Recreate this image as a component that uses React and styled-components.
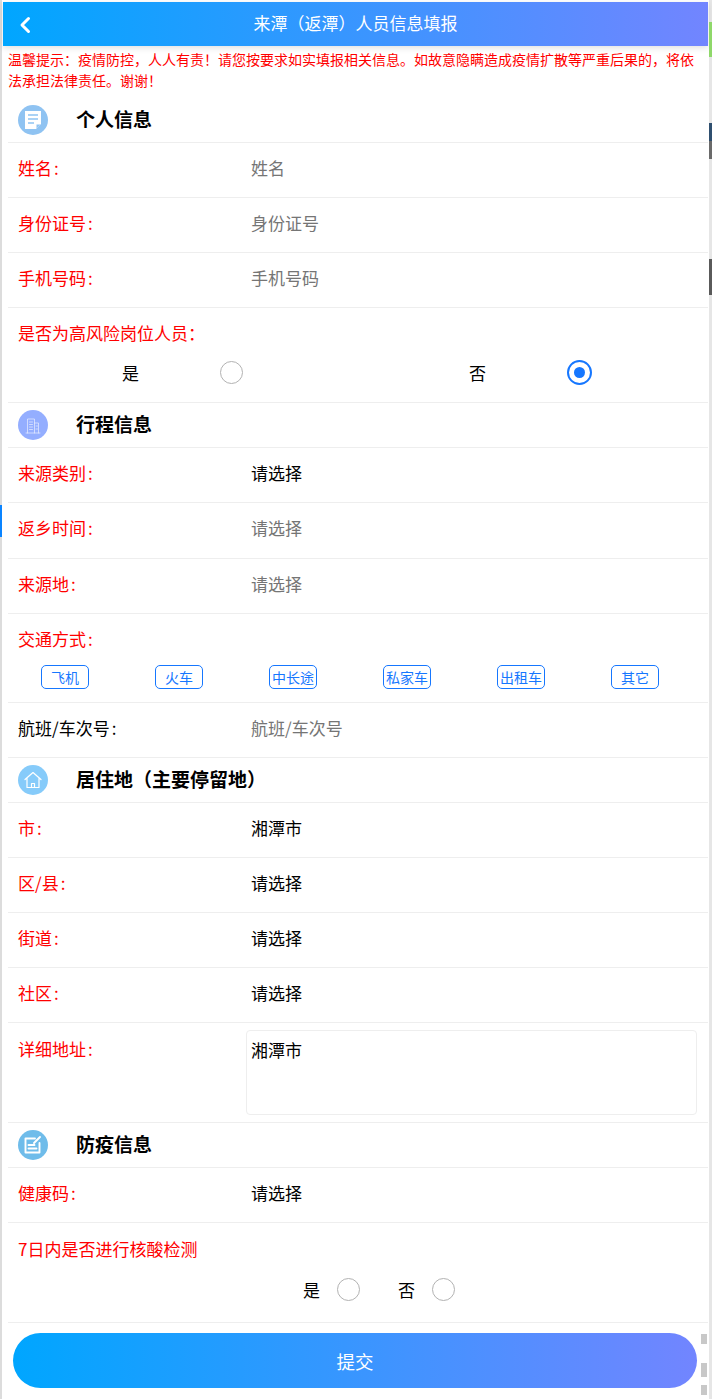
import React from 'react';
import styled, { createGlobalStyle } from 'styled-components';

const Global = createGlobalStyle`
  html, body {
    margin: 0;
    padding: 0;
    background: #fff;
    font-family: "Noto Sans CJK SC", "Liberation Sans", sans-serif;
  }
`;

const Page = styled.div`
  position: relative;
  box-sizing: border-box;
  width: 712px;
  height: 1399px;
  overflow: hidden;
  padding: 2px 4px 0 3px;
  background: #fff;
  box-shadow: inset 2px 0 0 #dcdcdc, inset -3px 0 0 #e6e6e6;
`;

const Header = styled.header`
  position: relative;
  display: flex;
  align-items: center;
  justify-content: center;
  height: 44px;
  padding-bottom: 4px;
  box-sizing: border-box;
  background: linear-gradient(90deg, #00a6ff, #7285ff);
  box-shadow: 0 2px 6px rgba(0, 0, 0, 0.12);
  color: #fff;
  font-size: 17px;
`;

const Back = styled.svg`
  position: absolute;
  left: 15px;
  top: 14px;
  width: 14px;
  height: 18px;
`;

const Notice = styled.p`
  margin: 0;
  padding: 3px 12px 7px 5px;
  height: 42px;
  color: #f00;
  font-size: 14px;
  line-height: 21px;
`;

const Form = styled.div`
  margin-left: 5px;
`;

const SectionHead = styled.div`
  display: flex;
  align-items: center;
  height: 44px;
  padding-left: 10px;
  border-bottom: 1px solid #eee;
`;

const Badge = styled.span`
  display: flex;
  align-items: center;
  justify-content: center;
  width: 30px;
  height: 30px;
  border-radius: 50%;
  background: ${p => p.$color};
`;

const SectionTitle = styled.h2`
  margin: 0 0 4px 28px;
  color: #000;
  font-size: 19px;
  font-weight: 700;
`;

const Row = styled.div`
  display: flex;
  align-items: center;
  box-sizing: border-box;
  height: ${p => p.$h || 55}px;
  padding: 0 0 6px 10px;
  border-bottom: 1px solid #eee;
  font-size: 17px;
`;

const Label = styled.div`
  width: 233px;
  flex: none;
  color: ${p => (p.$plain ? '#000' : '#f00')};
  font-size: 17px;
`;

const Colon = styled.span`
  margin-left: 2px;
`;

const Value = styled.div`
  color: ${p => (p.$muted ? '#757575' : '#000')};
`;

const Stack = styled.div`
  box-sizing: border-box;
  height: ${p => p.$h}px;
  padding: ${p => p.$pt || 12}px 0 0 10px;
  border-bottom: 1px solid #eee;
`;

const RadioLine = styled.div`
  display: flex;
  align-items: center;
  margin: ${p => p.$top || 15}px 0 0 -10px;
`;

const RadioPair = styled.div`
  display: flex;
  align-items: center;
  box-sizing: border-box;
  width: 347px;
  padding-left: 114px;
  gap: 81px;
  font-size: 17px;
  color: #000;
`;

const SmallPair = styled.div`
  display: flex;
  align-items: center;
  gap: 17px;
  margin-right: 38px;
  font-size: 17px;
  color: #000;
  &:first-child {
    margin-left: 295px;
  }
`;

const Radio = styled.span`
  display: flex;
  align-items: center;
  justify-content: center;
  box-sizing: border-box;
  width: ${p => (p.$on ? 25 : 23)}px;
  height: ${p => (p.$on ? 25 : 23)}px;
  border-radius: 50%;
  border: ${p => (p.$on ? '2px solid #1677ff' : '1px solid #b2b2b2')};
  &::after {
    content: '';
    display: ${p => (p.$on ? 'block' : 'none')};
    width: 11px;
    height: 11px;
    border-radius: 50%;
    background: #1677ff;
  }
`;

const Chips = styled.div`
  display: grid;
  grid-template-columns: repeat(6, 114px);
  justify-items: center;
  margin: 14px 0 0 -10px;
`;

const Chip = styled.span`
  box-sizing: border-box;
  display: flex;
  align-items: center;
  justify-content: center;
  width: 48px;
  height: 24px;
  padding-bottom: 1px;
  border: 1px solid #1677ff;
  border-radius: 5px;
  color: #1677ff;
  font-size: 14px;
  white-space: nowrap;
`;

const AreaRow = styled.div`
  display: flex;
  box-sizing: border-box;
  height: 100px;
  padding: 13px 0 0 10px;
  border-bottom: 1px solid #eee;
`;

const AreaLabel = styled(Label)`
  width: 228px;
`;

const TextBox = styled.div`
  box-sizing: border-box;
  width: 451px;
  height: 85px;
  margin-top: -6px;
  padding: 6px 4px;
  border: 1px solid #eee;
  border-radius: 4px;
  color: #000;
  font-size: 17px;
`;

const Submit = styled.button`
  display: block;
  width: 684px;
  height: 55px;
  margin: 10px 0 0 10px;
  border: 0;
  border-radius: 28px;
  background: linear-gradient(90deg, #00a6ff, #7285ff);
  color: #fff;
  font-family: inherit;
  font-size: 18.5px;
`;

const ScrollChip = styled.i`
  position: absolute;
  left: 701px;
  top: ${p => p.$top}px;
  width: 6px;
  height: ${p => p.$h}px;
  background: #c8c8c8;
`;

// bits of the page behind the frame that show past its edges
const EdgeChip = styled.i`
  position: absolute;
  left: ${p => p.$left}px;
  top: ${p => p.$top}px;
  width: ${p => p.$w || 3}px;
  height: ${p => p.$h}px;
  background: ${p => p.$color};
`;

const stroke = { fill: 'none', stroke: '#fff', strokeLinecap: 'round', strokeLinejoin: 'round' };

const DocIcon = () => (
  <svg width="20" height="22" viewBox="0 0 20 22">
    <path d="M2 2h16v13l-5 5H2z" fill="#fff" />
    <path d="M5 6h10M5 10h10M5 14h6" stroke="#8fc3f2" strokeWidth="1.6" />
    <path d="M13.500 19.500v-4h4z" fill="#8fc3f2" />
  </svg>
);

const BuildingIcon = () => (
  <svg width="16" height="17" viewBox="0 0 16 17" {...stroke} strokeWidth="0.7" opacity="0.8">
    <path d="M1 16h14M2.500 16V2h7v14M9.500 6h4v10" />
    <path d="M4.500 5h3M4.500 7.500h3M4.500 10h3M4.500 12.500h3M11 9h1.500M11 12h1.500" />
  </svg>
);

const HomeIcon = () => (
  <svg width="20" height="20" viewBox="0 0 20 20" {...stroke} strokeWidth="1.2">
    <path d="M2 9.500 10 2.500l8 7M4 8v9.500h12V8" />
    <path d="M8.500 17.500v-4h3v4" />
  </svg>
);

const EditIcon = () => (
  <svg width="20" height="20" viewBox="0 0 20 20" {...stroke} strokeWidth="1.9">
    <path d="M12 3.500H2.500v14h14V8" />
    <path d="M5.500 10h6M5.500 13.500h8M11 8l6-6" />
  </svg>
);

const Section = ({ color, icon, title }) => (
  <SectionHead>
    <Badge $color={color}>{icon}</Badge>
    <SectionTitle>{title}</SectionTitle>
  </SectionHead>
);

const Field = ({ label, value, muted, plain, h }) => (
  <Row $h={h}>
    <Label $plain={plain}>{label}<Colon>:</Colon></Label>
    <Value $muted={muted}>{value}</Value>
  </Row>
);

const transports = ['飞机', '火车', '中长途', '私家车', '出租车', '其它'];

export default function App() {
  return (
    <Page>
      <Global />
      <Header>
        <Back viewBox="0 0 14 18">
          <path d="M10.500 2.500 4 9l6.500 6.500" fill="none" stroke="#fff" strokeWidth="3" strokeLinecap="round" strokeLinejoin="round" />
        </Back>
        来潭（返潭）人员信息填报
      </Header>
      <Notice>温馨提示：疫情防控，人人有责！请您按要求如实填报相关信息。如故意隐瞒造成疫情扩散等严重后果的，将依法承担法律责任。谢谢！</Notice>
      <Form>
        <Section color="#8fc3f2" icon={<DocIcon />} title="个人信息" />
        <Field label="姓名" value="姓名" muted />
        <Field label="身份证号" value="身份证号" muted />
        <Field label="手机号码" value="手机号码" muted />
        <Stack $h={95}>
          <Label>是否为高风险岗位人员：</Label>
          <RadioLine>
            <RadioPair>是<Radio /></RadioPair>
            <RadioPair>否<Radio $on /></RadioPair>
          </RadioLine>
        </Stack>
        <Section color="#94aeff" icon={<BuildingIcon />} title="行程信息" />
        <Field label="来源类别" value="请选择" />
        <Field label="返乡时间" value="请选择" muted h={56} />
        <Field label="来源地" value="请选择" muted />
        <Stack $h={89}>
          <Label>交通方式<Colon>:</Colon></Label>
          <Chips>
            {transports.map(t => <Chip key={t}>{t}</Chip>)}
          </Chips>
        </Stack>
        <Field label="航班/车次号" value="航班/车次号" muted plain />
        <Section color="#86cbfa" icon={<HomeIcon />} title="居住地（主要停留地）" />
        <Field label="市" value="湘潭市" />
        <Field label="区/县" value="请选择" />
        <Field label="街道" value="请选择" />
        <Field label="社区" value="请选择" />
        <AreaRow>
          <AreaLabel>详细地址<Colon>:</Colon></AreaLabel>
          <TextBox>湘潭市</TextBox>
        </AreaRow>
        <Section color="#6fbcea" icon={<EditIcon />} title="防疫信息" />
        <Field label="健康码" value="请选择" />
        <Stack $h={100} $pt={13}>
          <Label>7日内是否进行核酸检测</Label>
          <RadioLine $top={16}>
            <SmallPair>是<Radio /></SmallPair>
            <SmallPair>否<Radio /></SmallPair>
          </RadioLine>
        </Stack>
      </Form>
      <Submit>提交</Submit>
      <ScrollChip $top={1334} $h={10} />
      <ScrollChip $top={1363} $h={14} />
      <ScrollChip $top={1385} $h={10} />
      <EdgeChip $left={709} $top={22} $h={35} $color="#8fd86a" />
      <EdgeChip $left={709} $top={123} $h={18} $color="#2f4f6f" />
      <EdgeChip $left={709} $top={141} $h={18} $color="#6a6a6a" />
      <EdgeChip $left={709} $top={259} $h={36} $color="#5a5a5a" />
      <EdgeChip $left={0} $top={505} $w={2} $h={32} $color="#0a84ff" />
    </Page>
  );
}
